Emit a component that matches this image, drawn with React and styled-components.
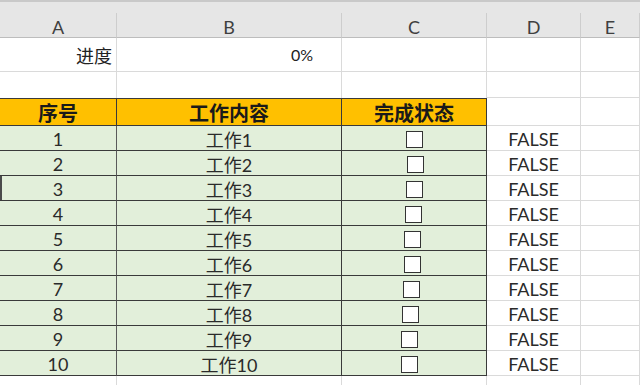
import React from 'react';
import styled, { createGlobalStyle } from 'styled-components';

const GlobalStyle = createGlobalStyle`
  html, body {
    margin: 0;
    padding: 0;
    background: #ffffff;
  }
  body {
    font-family: "Lato", "Noto Sans CJK SC", sans-serif;
    color: #222;
  }
`;

const Frame = styled.div`
  width: 640px;
  height: 385px;
  overflow: hidden;
  background: #ffffff;
`;

const TopStrip = styled.div`
  height: 11px;
  background: #e6e6e6;
  border-top: 2px solid #c9c9c9;
`;

const Sheet = styled.div`
  display: grid;
  grid-template-columns: 117px 225px 145px 94px 1fr;
  grid-template-rows: 25px 34px 26px 28px repeat(10, 25px) 20px;
`;

const ColHead = styled.div`
  display: flex;
  align-items: center;
  justify-content: center;
  background: #e6e6e6;
  border-right: 1px solid #cdcdcd;
  border-bottom: 1px solid #bdbdbd;
  font-size: 18px;
  color: #3f3f3f;
  padding-top: 4px;
  box-sizing: border-box;
`;

const Cell = styled.div`
  display: flex;
  align-items: center;
  justify-content: ${p => p.$align || 'flex-start'};
  padding: 0 4px;
  box-sizing: border-box;
  border-right: 1px solid #dadada;
  border-bottom: ${p => (p.$open ? 'none' : '1px solid #dadada')};
  font-size: 18px;
`;

const HeadCell = styled.div`
  display: flex;
  align-items: center;
  justify-content: center;
  box-sizing: border-box;
  background: #ffc000;
  border-top: 1px solid #3a3a3a;
  border-right: 1px solid #3a3a3a;
  border-bottom: 1px solid #3a3a3a;
  font-size: 20px;
  font-weight: 700;
  color: #1a1a1a;
`;

const BodyCell = styled.div`
  display: flex;
  align-items: center;
  justify-content: center;
  box-sizing: border-box;
  background: #e2efda;
  border-right: 1px solid ${p => (p.$soft ? '#5a5a5a' : '#3a3a3a')};
  border-bottom: 1px solid #3a3a3a;
  box-shadow: ${p => (p.$mark ? 'inset 2px 0 0 #4a4a4a' : 'none')};
  font-size: 18px;
  color: #2a2a2a;
  padding-top: 2px;
`;

const BoolCell = styled(Cell)`
  justify-content: center;
  font-size: 18px;
  color: #2a2a2a;
  padding-top: 2px;
`;

const Checkbox = styled.span`
  display: block;
  width: 17px;
  height: 17px;
  box-sizing: border-box;
  background: #ffffff;
  border: 1.5px solid #333;
  transform: translateX(${p => p.$shift}px);
`;

const letters = ['A', 'B', 'C', 'D', 'E'];

const tasks = [
  { no: 1, shift: 0 },
  { no: 2, shift: 1 },
  { no: 3, shift: 0, mark: true },
  { no: 4, shift: -1 },
  { no: 5, shift: -2 },
  { no: 6, shift: -2 },
  { no: 7, shift: -3 },
  { no: 8, shift: -4 },
  { no: 9, shift: -5 },
  { no: 10, shift: -5 },
];

export default function App() {
  return (
    <Frame>
      <GlobalStyle />
      <TopStrip />
      <Sheet>
        {letters.map(l => (
          <ColHead key={l}>{l}</ColHead>
        ))}

        <Cell $align="flex-end">进度</Cell>
        <Cell $align="flex-end" style={{ paddingRight: 28, fontSize: 16 }}>0%</Cell>
        <Cell />
        <Cell />
        <Cell />

        <Cell $open />
        <Cell $open />
        <Cell $open />
        <Cell />
        <Cell />

        <HeadCell>序号</HeadCell>
        <HeadCell>工作内容</HeadCell>
        <HeadCell>完成状态</HeadCell>
        <Cell />
        <Cell />

        {tasks.map(t => (
          <React.Fragment key={t.no}>
            <BodyCell $soft $mark={t.mark}>{t.no}</BodyCell>
            <BodyCell>工作{t.no}</BodyCell>
            <BodyCell>
              <Checkbox $shift={t.shift} />
            </BodyCell>
            <BoolCell>FALSE</BoolCell>
            <Cell />
          </React.Fragment>
        ))}

        <Cell />
        <Cell />
        <Cell />
        <Cell />
        <Cell />
      </Sheet>
    </Frame>
  );
}
